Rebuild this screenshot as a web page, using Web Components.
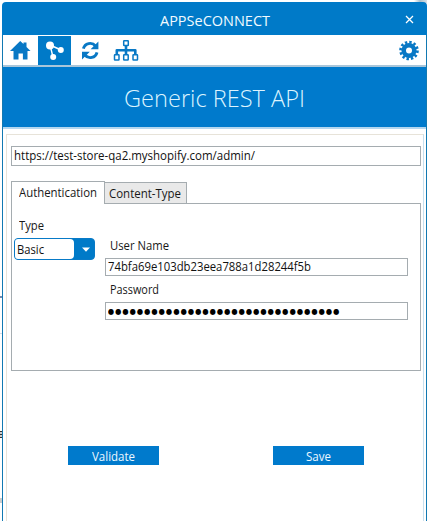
<!DOCTYPE html>
<html lang="en"><head><meta charset="utf-8"><title>APPSeCONNECT</title>
<style>html,body{margin:0;width:427px;height:521px;overflow:hidden;background:#fff}body{font:12px/16px "Open Sans","Noto Sans",sans-serif;color:#181818}</style></head>
<body><connect-window></connect-window>
<script>
class Base extends HTMLElement{
  constructor(){super();this.attachShadow({mode:'open'}).innerHTML=this.constructor.markup}
}
/* A label whose text is condensed or widened to the measure given in "w". */
class FitLabel extends Base{
  static markup=`<style>:host{display:block;white-space:nowrap;flex:none}span{display:inline-block;transform-origin:0 50%}</style><span><slot></slot></span>`;
  connectedCallback(){const w=+this.getAttribute('w');this.style.width=w+'px';
    const s=this.shadowRoot.querySelector('span');s.style.transform=`scaleX(${w/s.getBoundingClientRect().width})`}
}
class TitleBar extends Base{
  static markup=`<style>:host{display:flex;height:33px;background:#007ac8;border-radius:4px 4px 0 0;color:#f2faff;align-items:center;font-size:14px;line-height:20px;padding:0 13px 0 158px;justify-content:space-between;box-sizing:border-box}fit-label{margin-top:5px}svg{margin-top:2px}</style>
  <fit-label w="110">APPSeCONNECT</fit-label><svg width="9" height="9" viewBox="0 0 9 9"><path d="M1 1l7 7M8 1L1 8" stroke="#fff" stroke-width="1.25"/></svg>`;
}
class ToolBar extends Base{
  static markup=`<style>:host{display:flex;height:32px;box-sizing:border-box;border-bottom:2px solid #a9c6da;background:#fff;padding:0 6px 0 0}div{width:33px;height:29px;margin-top:1px;flex:none}.on{background:#007ac8}.gear{margin-left:auto;width:23px}svg{display:block;overflow:visible}</style>
  <div style="width:35px"><svg width="35" height="29"><path d="M7 15L17.200 5l3.300 3V6.500h3v4.400L27.500 15h-3v8.500h-4.600V17.500h-4.400v6h-5V15z" fill="#0878c5"/></svg></div>
  <div class="on"><svg width="33" height="29"><path d="M12 9l11 5M12 9l3 12" stroke="#fff" stroke-width="1.400"/><g fill="#fff"><circle cx="12" cy="9.500" r="4"/><circle cx="22.800" cy="14" r="3"/><circle cx="15.200" cy="21" r="3"/></g></svg></div>
  <div style="width:38px"><svg width="37" height="29" fill="none" stroke="#0878c5" stroke-width="2.900"><path d="M12.400 12.700A6.900 6.900 0 0 1 24.500 10"/><path d="M26 16.300A6.900 6.900 0 0 1 13.900 19"/><path d="M27.400 5.500v7.800h-7.800zM11 23.500v-7.800h7.800z" fill="#0878c5" stroke="none"/></svg></div>
  <div><svg width="33" height="29" fill="none" stroke="#0878c5"><path d="M17 9v11M7.800 19v-4.800h18.500V19" stroke-width="2.600" stroke-linejoin="round"/><g stroke-width="1.500" fill="#fff"><rect x="14.700" y="4.800" width="4.600" height="4.600" rx=".5"/><rect x="5.500" y="18.800" width="4.500" height="5.200" rx=".5"/><rect x="14.700" y="18.800" width="4.500" height="5.200" rx=".5"/><rect x="24" y="18.800" width="4.500" height="5.200" rx=".5"/></g></svg></div>
  <div class="gear"><svg width="23" height="29"><g transform="translate(12 14.500)" fill="none" stroke="#0878c5"><circle r="5.300" stroke-width="4.600"/><circle r="8.400" stroke-width="2.800" stroke-dasharray="2.400 1.998"/></g></svg></div>`;
}
class PageBanner extends Base{
  static markup=`<style>:host{display:block;height:62px;box-sizing:border-box;background:#007acc;border-bottom:2px solid #b4d7f0;color:#dcf4ff;font-size:24px;line-height:32px;font-weight:300;padding:15px 0 0 121px}</style><fit-label w="181"><slot></slot></fit-label>`;
}
class TextField extends Base{
  static markup=`<style>:host{display:flex;align-items:center;box-sizing:border-box;border:1px solid #a5acb0;padding-left:2px;background:#fff;color:#111;overflow:hidden}</style><slot></slot>`;
}
class DropDown extends Base{
  static markup=`<style>:host{display:flex;box-sizing:border-box;width:81px;height:22px;border:1px solid #087ac7;border-radius:4px;background:#007ac8;color:#111}.v{box-sizing:border-box;width:59px;background:#fff;border-radius:3px 4px 4px 3px;padding:2px 0 0 2px;line-height:17px}svg{margin:8px 0 0 8px}</style><div class="v"><slot></slot></div><svg width="8" height="5"><path d="M0 .5h8L4 4.700z" fill="#fff"/></svg>`;
}
class PushButton extends Base{
  static markup=`<style>:host{display:flex;justify-content:center;box-sizing:border-box;width:91px;height:19px;padding-top:3px;background:#007acc;color:#edf8ff}</style><slot></slot>`;
}
class TabStrip extends Base{
  static markup=`<style>:host{display:flex;align-items:flex-end;height:23px;position:relative;z-index:1}div{box-sizing:border-box;border:1px solid #a5acb0;border-bottom:0}.a{width:94px;height:23px;background:#fff;padding:3px 0 0 7px}.b{width:83px;height:21px;margin:0 0 1px -1px;background:#e9e9e9;padding:3px 0 0 4px}</style><div class="a"><fit-label w="78">Authentication</fit-label></div><div class="b"><fit-label w="72">Content-Type</fit-label></div>`;
}
class AuthPanel extends Base{
  static markup=`<style>:host{display:flex;box-sizing:border-box;height:168px;margin-top:-1px;border:1px solid #a5acb0}.l{width:93px;padding:14px 0 0 2px;box-sizing:border-box}.l>fit-label{margin:0 0 4px 5px}.r{width:303px;padding-top:34px}.r>fit-label{margin-left:5px}text-field{height:18px}.u{margin:4px 0 6px}.p{margin-top:4px}.dots{font:8px/16px "DejaVu Sans",sans-serif;letter-spacing:1.1px;color:#000;padding-top:1px}</style>
  <div class="l"><fit-label w="25">Type</fit-label><drop-down><fit-label w="27">Basic</fit-label></drop-down></div>
  <div class="r"><fit-label w="59">User Name</fit-label><text-field class="u"><fit-label w="203">74bfa69e103db23eea788a1d28244f5b</fit-label></text-field><fit-label w="49">Password</fit-label><text-field class="p"><fit-label class="dots" w="232.500">${'●'.repeat(32)}</fit-label></text-field></div>`;
}
class ConnectWindow extends Base{
  static markup=`<style>:host{display:grid;grid-template-columns:2px 425px;height:521px}.edge{display:flex;flex-direction:column}.edge i{height:2px;background:#7489ae;margin-top:296px}.edge i+i{height:1px;margin-top:35px;background:#d8dce8}.edge b{width:2px;height:7px;margin-top:97px;background:repeating-linear-gradient(#333 0 1px,#ccc 1px 3px)}.edge i.s{height:5px;margin-top:60px;background:#ccc}
  .win{display:flex;flex-direction:column;padding-top:2px;background:linear-gradient(90deg,#fff 0 412px,#aabfcc 418px,#d9e1e7) top/100% 3px no-repeat,#fff}main{display:flex;flex-direction:column;flex:1;min-height:0;border:solid #1279b2;border-width:0 1px}.body{box-sizing:border-box;width:418px;flex:1;margin:5px 1px 0 3px;border:1px solid #e7e3d9;border-bottom:0;border-right-color:#c8e0ef;padding:11px 2px 0 4px}.url{height:20px;margin-bottom:15px}.act{display:flex;justify-content:space-between;margin:75px 57px 0}</style>
  <div class="edge"><i></i><i></i><b></b><i class="s"></i></div>
  <div class="win"><title-bar></title-bar><main><tool-bar></tool-bar><page-banner>Generic REST API</page-banner><div class="body"><text-field class="url"><fit-label w="241">https://test-store-qa2.myshopify.com/admin/</fit-label></text-field><tab-strip></tab-strip><auth-panel></auth-panel><div class="act"><push-button><fit-label w="43">Validate</fit-label></push-button><push-button><fit-label w="25">Save</fit-label></push-button></div></div></main></div>`;
}
for(const [n,c] of Object.entries({'fit-label':FitLabel,'title-bar':TitleBar,'tool-bar':ToolBar,'page-banner':PageBanner,'text-field':TextField,'drop-down':DropDown,'push-button':PushButton,'tab-strip':TabStrip,'auth-panel':AuthPanel,'connect-window':ConnectWindow}))customElements.define(n,c);
</script></body></html>
